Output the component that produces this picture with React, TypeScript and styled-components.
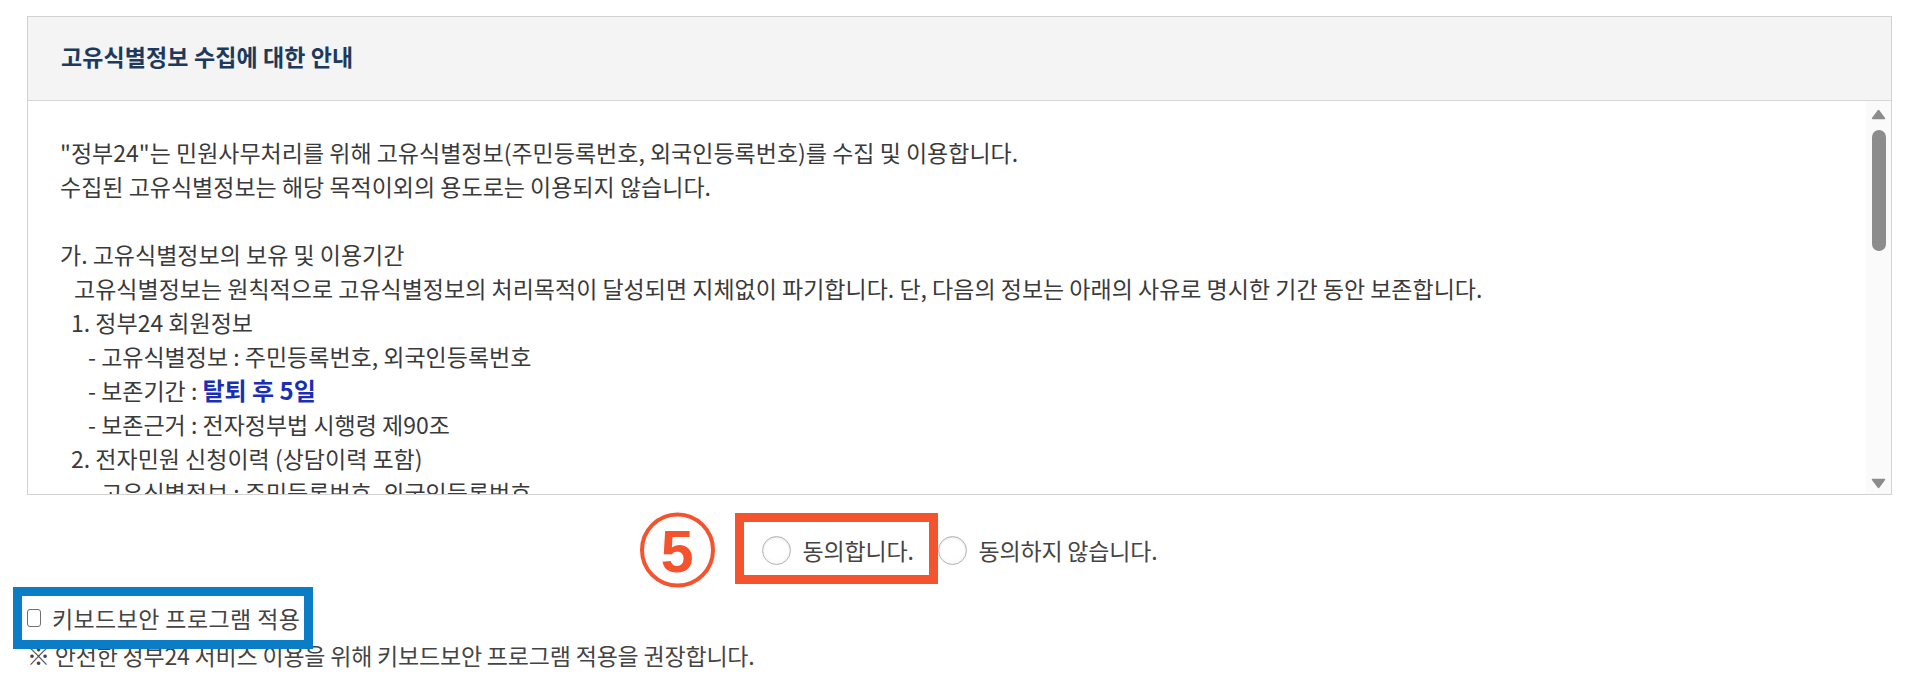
import React from "react";
import styled, { createGlobalStyle } from "styled-components";

const GlobalStyle = createGlobalStyle`
  html, body { margin: 0; padding: 0; background: #ffffff; }
  body {
    font-family: "Noto Sans CJK KR", "Noto Sans", "Liberation Sans", sans-serif;
    color: #333333;
    width: 1917px;
    height: 680px;
    overflow: hidden;
  }
`;

const Page = styled.div`
  padding: 16px 0 0 27px;
  width: 1865px;
`;

const Panel = styled.section`
  border: 1px solid #d2d2d2;
  background: #ffffff;
`;

const PanelHeader = styled.header`
  height: 84px;
  display: flex;
  align-items: center;
  padding-left: 33px;
  padding-bottom: 5px;
  box-sizing: border-box;
  background: #f4f4f4;
  border-bottom: 1px solid #d6d6d6;
`;

const PanelTitle = styled.h2`
  margin: 0;
  font-size: 23px;
  font-weight: 700;
  color: #1d3a5c;
  letter-spacing: 0.1px;
`;

const PanelBody = styled.div`
  display: flex;
  height: 393px;
`;

const TextArea = styled.div`
  flex: 1;
  overflow: hidden;
  padding: 34px 0 0 32px;
`;

const Line = styled.p<{ $indent?: number }>`
  margin: 0;
  height: 34px;
  line-height: 34px;
  font-size: 23px;
  color: #3a3a3a;
  white-space: nowrap;
  letter-spacing: 0;
  padding-left: ${(p) => p.$indent ?? 0}px;
`;

const Highlight = styled.strong`
  font-size: 24px;
  font-weight: 700;
  color: #1b2fb3;
`;

const ScrollRail = styled.div`
  width: 25px;
  background: #fafafa;
  display: flex;
  flex-direction: column;
  align-items: center;
  padding: 8px 0 5px;
  box-sizing: border-box;
`;

const Thumb = styled.div`
  margin-top: 10px;
  width: 14px;
  height: 121px;
  border-radius: 7px;
  background: #8c8c8c;
`;

const RailSpacer = styled.div`
  flex: 1;
`;

const Arrow = ({ down }: { down?: boolean }) => (
  <svg width="15" height="11" viewBox="0 0 15 11">
    <path
      d={down ? "M1.5 1.5 H13.5 L7.5 9.5 Z" : "M1.5 9.5 H13.5 L7.5 1.5 Z"}
      fill="#8c8c8c"
      stroke="#8c8c8c"
      strokeWidth="1.5"
      strokeLinejoin="round"
    />
  </svg>
);

const RadioRow = styled.div`
  margin-top: 38px;
  height: 34px;
  display: flex;
  justify-content: center;
  align-items: center;
  gap: 24px;
`;

const RadioOption = styled.label<{ $marked?: boolean }>`
  position: relative;
  display: inline-flex;
  align-items: center;
  gap: 12px;
  height: 34px;
  font-size: 23px;
  color: #444444;
  letter-spacing: -0.2px;
  ${(p) =>
    p.$marked
      ? `
    &::after {
      content: "";
      position: absolute;
      top: -20px;
      bottom: -17px;
      left: -27px;
      right: -24px;
      border: 9px solid #f4532e;
      pointer-events: none;
    }
  `
      : ""}
`;

const RadioDot = styled.span`
  width: 29px;
  height: 29px;
  box-sizing: border-box;
  border-radius: 50%;
  border: 1.5px solid #b4b4b4;
  background: radial-gradient(circle at 50% 40%, #ffffff 55%, #f0f0f0 100%);
  box-shadow: inset 0 1px 2px rgba(0, 0, 0, 0.12);
  flex: none;
`;

const StepBadge = styled.span`
  position: absolute;
  right: calc(100% + 47px);
  top: 50%;
  transform: translateY(-50%);
  width: 75px;
  height: 75px;
  box-sizing: border-box;
  border: 4px solid #f4532e;
  border-radius: 50%;
  display: flex;
  align-items: center;
  justify-content: center;
  font-family: "Liberation Sans", "Noto Sans", sans-serif;
  font-weight: 700;
  font-size: 59px;
  line-height: 1;
  color: #f4532e;
  padding-top: 3px;
`;

const CheckRow = styled.div`
  margin-top: 34px;
  height: 34px;
  display: flex;
  align-items: center;
`;

const CheckLabel = styled.label`
  position: relative;
  display: inline-flex;
  align-items: center;
  height: 34px;
  gap: 11px;
  font-size: 23px;
  color: #444444;
  letter-spacing: 0.4px;
  &::after {
    content: "";
    position: absolute;
    top: -14px;
    bottom: -14px;
    left: -14px;
    right: -13px;
    border: 9px solid #0b7cc6;
    pointer-events: none;
  }
`;

const CheckBox = styled.span`
  width: 14px;
  height: 18px;
  box-sizing: border-box;
  border: 1.5px solid #707070;
  border-radius: 3px;
  background: #ffffff;
  flex: none;
`;

const Note = styled.p`
  margin: 3px 0 0;
  height: 34px;
  line-height: 34px;
  font-size: 23px;
  color: #444444;
  letter-spacing: -0.2px;
  white-space: nowrap;
`;

export default function App() {
  return (
    <>
      <GlobalStyle />
      <Page>
        <Panel>
          <PanelHeader>
            <PanelTitle>고유식별정보 수집에 대한 안내</PanelTitle>
          </PanelHeader>
          <PanelBody>
            <TextArea>
              <Line>"정부24"는 민원사무처리를 위해 고유식별정보(주민등록번호, 외국인등록번호)를 수집 및 이용합니다.</Line>
              <Line>수집된 고유식별정보는 해당 목적이외의 용도로는 이용되지 않습니다.</Line>
              <Line>&nbsp;</Line>
              <Line>가. 고유식별정보의 보유 및 이용기간</Line>
              <Line $indent={14}>
                고유식별정보는 원칙적으로 고유식별정보의 처리목적이 달성되면 지체없이 파기합니다. 단, 다음의 정보는 아래의 사유로 명시한 기간 동안 보존합니다.
              </Line>
              <Line $indent={11}>1. 정부24 회원정보</Line>
              <Line $indent={28}>- 고유식별정보 : 주민등록번호, 외국인등록번호</Line>
              <Line $indent={28}>
                - 보존기간 : <Highlight>탈퇴 후 5일</Highlight>
              </Line>
              <Line $indent={28}>- 보존근거 : 전자정부법 시행령 제90조</Line>
              <Line $indent={11}>2. 전자민원 신청이력 (상담이력 포함)</Line>
              <Line $indent={28}>- 고유식별정보 : 주민등록번호, 외국인등록번호</Line>
            </TextArea>
            <ScrollRail>
              <Arrow />
              <Thumb />
              <RailSpacer />
              <Arrow down />
            </ScrollRail>
          </PanelBody>
        </Panel>

        <RadioRow>
          <RadioOption $marked>
            <StepBadge>5</StepBadge>
            <RadioDot />
            동의합니다.
          </RadioOption>
          <RadioOption>
            <RadioDot />
            동의하지 않습니다.
          </RadioOption>
        </RadioRow>

        <CheckRow>
          <CheckLabel>
            <CheckBox />
            키보드보안 프로그램 적용
          </CheckLabel>
        </CheckRow>
        <Note>※ 안전한 정부24 서비스 이용을 위해 키보드보안 프로그램 적용을 권장합니다.</Note>
      </Page>
    </>
  );
}
